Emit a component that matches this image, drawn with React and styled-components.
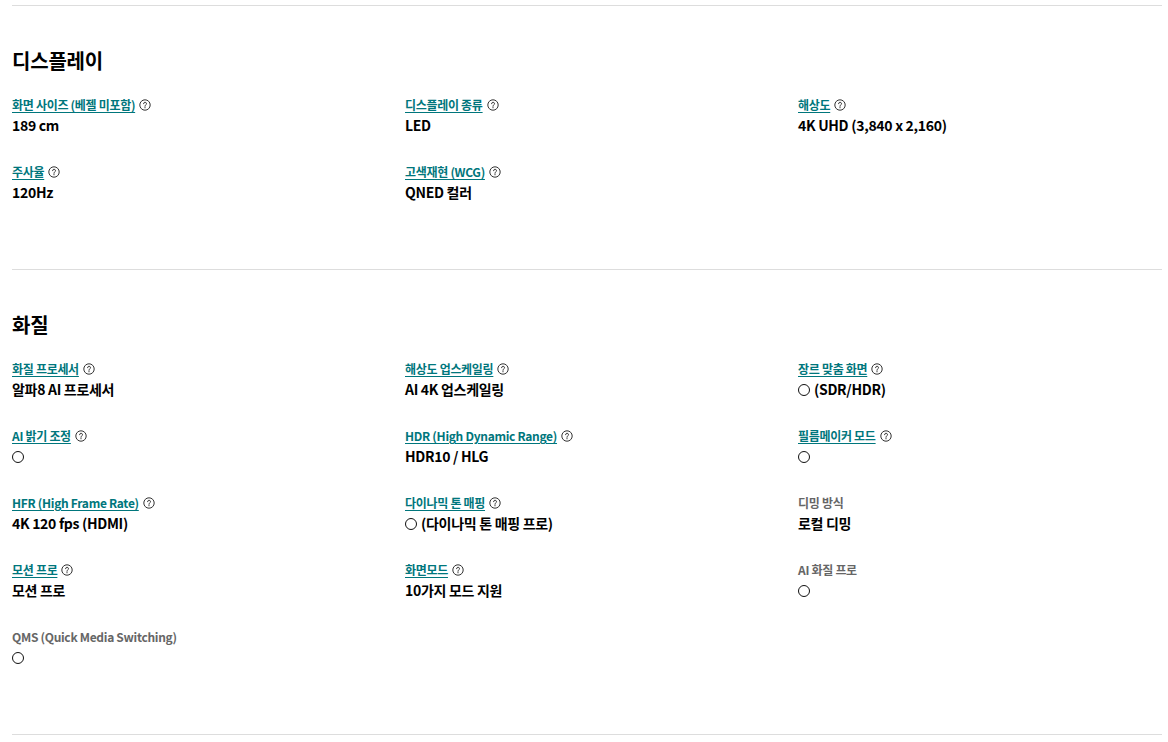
import React from "react";
import styled, { createGlobalStyle } from "styled-components";

const Global = createGlobalStyle`
  html, body { margin: 0; padding: 0; background: #fff; }
  body {
    font-family: "Noto Sans CJK KR", "Noto Sans", sans-serif;
    color: #000;
  }
`;

const Page = styled.div`
  padding: 5px 6px 0 12px;
`;

const Section = styled.section`
  border-top: 1px solid #dddddd;
  padding: 40px 0 67px;
  &:last-child { border-bottom: 1px solid #dddddd; }
`;

const Heading = styled.h2`
  margin: 0 0 20px;
  font-size: 20px;
  line-height: 30px;
  font-weight: 700;
  letter-spacing: -0.2px;
`;

const Grid = styled.div`
  display: grid;
  grid-template-columns: 393px 393px 1fr;
  row-gap: 28px;
`;

const Item = styled.div`
  display: flex;
  flex-direction: column;
`;

const LabelRow = styled.div`
  display: flex;
  align-items: center;
  gap: 4px;
  height: 18px;
`;

const Label = styled.span`
  font-size: 12px;
  line-height: 18px;
  font-weight: 600;
  letter-spacing: -0.3px;
  color: ${(p) => (p.$link ? "#00767c" : "#666666")};
  text-decoration: ${(p) => (p.$link ? "underline" : "none")};
  text-underline-offset: 2px;
`;

const Value = styled.div`
  margin-top: 1px;
  font-size: 14px;
  line-height: 20px;
  font-weight: 700;
  letter-spacing: -0.3px;
`;

const Mark = styled.span`
  display: inline-block;
  width: 10px;
  height: 10px;
  border: 1.5px solid #111;
  border-radius: 50%;
  vertical-align: -1px;
  margin-right: 4px;
`;

const Help = () => (
  <svg width="12" height="12" viewBox="0 0 12 12" fill="none">
    <circle cx="6" cy="6" r="5.2" stroke="#333" strokeWidth="1" />
    <path d="M4.6 4.7a1.45 1.45 0 1 1 2.1 1.3c-.5.25-.7.5-.7 1v.3" stroke="#333" strokeWidth="1" strokeLinecap="round" />
    <circle cx="6" cy="8.7" r="0.6" fill="#333" />
  </svg>
);

const sections = [
  {
    title: "디스플레이",
    items: [
      { label: "화면 사이즈 (베젤 미포함)", value: "189 cm", link: true },
      { label: "디스플레이 종류", value: "LED", link: true },
      { label: "해상도", value: "4K UHD (3,840 x 2,160)", link: true },
      { label: "주사율", value: "120Hz", link: true },
      { label: "고색재현 (WCG)", value: "QNED 컬러", link: true },
    ],
  },
  {
    title: "화질",
    items: [
      { label: "화질 프로세서", value: "알파8 AI 프로세서", link: true },
      { label: "해상도 업스케일링", value: "AI 4K 업스케일링", link: true },
      { label: "장르 맞춤 화면", mark: true, value: "(SDR/HDR)", link: true },
      { label: "AI 밝기 조정", mark: true, value: "", link: true },
      { label: "HDR (High Dynamic Range)", value: "HDR10 / HLG", link: true },
      { label: "필름메이커 모드", mark: true, value: "", link: true },
      { label: "HFR (High Frame Rate)", value: "4K 120 fps (HDMI)", link: true },
      { label: "다이나믹 톤 매핑", mark: true, value: "(다이나믹 톤 매핑 프로)", link: true },
      { label: "디밍 방식", value: "로컬 디밍", link: false },
      { label: "모션 프로", value: "모션 프로", link: true },
      { label: "화면모드", value: "10가지 모드 지원", link: true },
      { label: "AI 화질 프로", mark: true, value: "", link: false },
      { label: "QMS (Quick Media Switching)", mark: true, value: "", link: false },
    ],
  },
];

export default function App() {
  return (
    <Page>
      <Global />
      {sections.map((s) => (
        <Section key={s.title}>
          <Heading>{s.title}</Heading>
          <Grid>
            {s.items.map((it) => (
              <Item key={it.label}>
                <LabelRow>
                  <Label $link={it.link}>{it.label}</Label>
                  {it.link && <Help />}
                </LabelRow>
                <Value>
                  {it.mark && <Mark role="img" aria-label="○" />}
                  {it.value}
                </Value>
              </Item>
            ))}
          </Grid>
        </Section>
      ))}
    </Page>
  );
}
